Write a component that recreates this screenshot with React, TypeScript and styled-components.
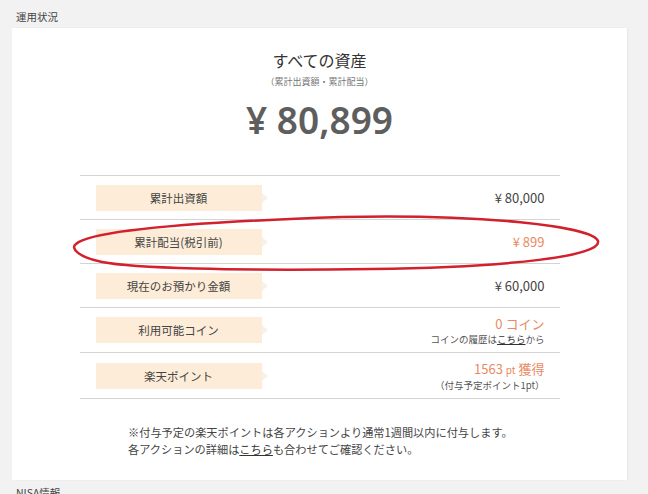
import React from "react";
import styled, { createGlobalStyle } from "styled-components";

const Global = createGlobalStyle`
  html, body { margin: 0; padding: 0; background: #f2f2f2; }
  body { font-family: "Noto Sans CJK JP", "Noto Sans", sans-serif; color: #333; }
`;

const Page = styled.div`
  width: 648px;
  height: 494px;
  overflow: hidden;
  padding: 8px 21px 0 12px;
  box-sizing: border-box;
`;

const SectionTitle = styled.div`
  font-size: 10.5px;
  color: #444;
  padding-left: 4px;
  height: 20px;
  line-height: 18px;
`;

const Card = styled.div`
  background: #fff;
  box-shadow: 1px 0 2px rgba(0, 0, 0, 0.05);
  padding: 20px 0 0;
  height: 452px;
  box-sizing: border-box;
  display: flex;
  flex-direction: column;
  align-items: center;
`;

const Title = styled.div`
  font-size: 16px;
  line-height: 24px;
  color: #333;
`;

const Sub = styled.div`
  font-size: 9px;
  line-height: 12px;
  color: #777;
  margin-top: 4px;
`;

const Total = styled.div`
  font-family: "Noto Sans", "Open Sans", sans-serif;
  font-weight: 600;
  font-size: 37px;
  line-height: 50px;
  color: #5e5e5e;
  margin-top: 7px;
`;

const Table = styled.div`
  position: relative;
  width: 480px;
  margin-top: 30px;
  border-top: 1px solid #d4d4d4;
`;

const Row = styled.div<{ $h?: number }>`
  height: ${(p) => p.$h ?? 43}px;
  border-bottom: 1px solid #d4d4d4;
  display: flex;
  align-items: center;
  justify-content: space-between;
  padding: 0 15px 0 16px;
`;

const Label = styled.div`
  position: relative;
  width: 166px;
  height: 26px;
  background: #fdecd8;
  font-size: 11.5px;
  color: #444;
  display: flex;
  align-items: center;
  justify-content: center;
  &::after {
    content: "";
    position: absolute;
    right: -6px;
    top: 8px;
    border-left: 6px solid #f8f1ea;
    border-top: 5px solid transparent;
    border-bottom: 5px solid transparent;
  }
`;

const ValueCol = styled.div`
  display: flex;
  flex-direction: column;
  align-items: flex-end;
`;

const Value = styled.div<{ $accent?: boolean }>`
  font-size: 13px;
  line-height: 17px;
  color: ${(p) => (p.$accent ? "#ea8a64" : "#444")};
`;

const Small = styled.span`
  font-size: 10px;
`;

const Note = styled.div`
  font-size: 9.5px;
  line-height: 14px;
  color: #555;
`;

const Link = styled.span`
  text-decoration: underline;
  color: #333;
`;

const Notes = styled.div`
  align-self: flex-start;
  margin: 25px 0 0 116px;
  font-size: 11.2px;
  line-height: 17px;
  color: #444;
`;

const NextTitle = styled.div`
  font-size: 10.5px;
  color: #444;
  padding-left: 4px;
  margin-top: 4px;
  line-height: 18px;
`;

const Ellipse = styled.svg`
  position: absolute;
  left: -8px;
  top: 38px;
  pointer-events: none;
`;

export default function App() {
  return (
    <>
      <Global />
      <Page>
        <SectionTitle>運用状況</SectionTitle>
        <Card>
          <Title>すべての資産</Title>
          <Sub>（累計出資額・累計配当）</Sub>
          <Total>¥ 80,899</Total>
          <Table>
            <Row>
              <Label>累計出資額</Label>
              <Value>¥ 80,000</Value>
            </Row>
            <Row>
              <Label>累計配当(税引前)</Label>
              <Value $accent>¥ 899</Value>
            </Row>
            <Row>
              <Label>現在のお預かり金額</Label>
              <Value>¥ 60,000</Value>
            </Row>
            <Row $h={44}>
              <Label>利用可能コイン</Label>
              <ValueCol>
                <Value $accent>0 コイン</Value>
                <Note>
                  コインの履歴は<Link>こちら</Link>から
                </Note>
              </ValueCol>
            </Row>
            <Row $h={45}>
              <Label>楽天ポイント</Label>
              <ValueCol>
                <Value $accent>
                  1563 <Small>pt</Small> 獲得
                </Value>
                <Note>（付与予定ポイント1pt）</Note>
              </ValueCol>
            </Row>
            <Ellipse width="540" height="62" viewBox="0 0 540 62">
              <path
                d="M 4 30 C 20 16, 120 8, 270 3 C 410 0, 520 12, 526 27 C 530 42, 440 53, 300 55 C 160 57, 60 54, 30 48 C 6 43, -2 34, 4 30 Z"
                fill="none"
                stroke="#d2202c"
                strokeWidth="2.5"
              />
            </Ellipse>
          </Table>
          <Notes>
            ※付与予定の楽天ポイントは各アクションより通常1週間以内に付与します。
            <br />
            各アクションの詳細は<Link>こちら</Link>も合わせてご確認ください。
          </Notes>
        </Card>
        <NextTitle>NISA情報</NextTitle>
      </Page>
    </>
  );
}
